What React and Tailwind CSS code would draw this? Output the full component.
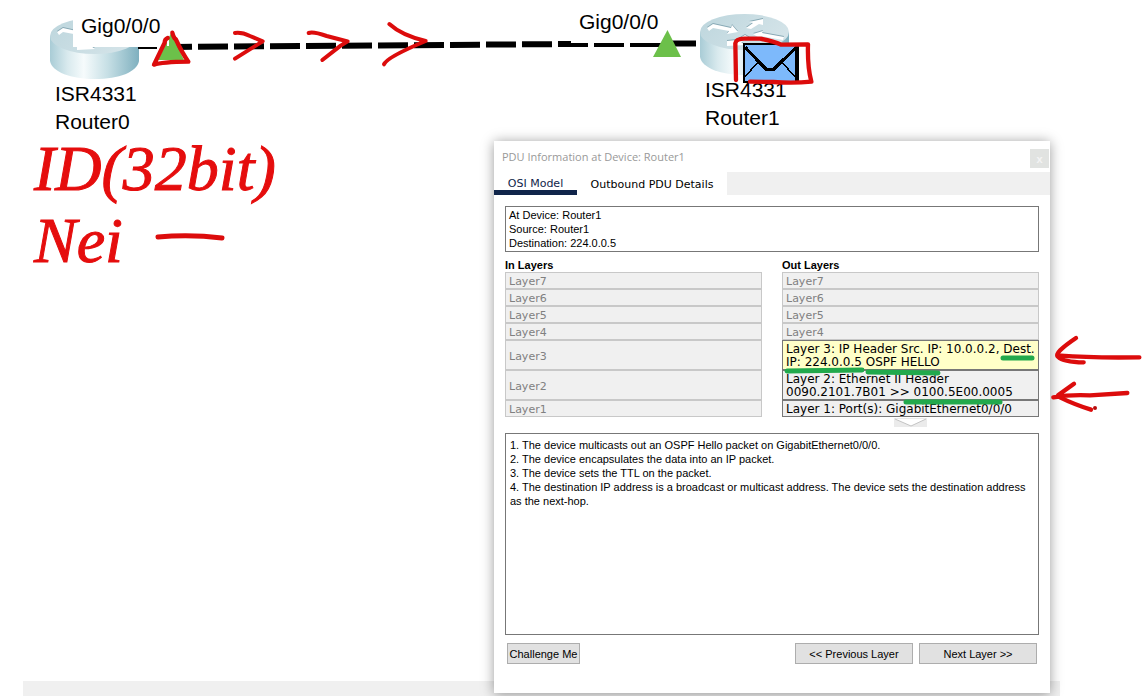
import React from "react";

const idleLayers = [
  { id: 7, lines: ["Layer7"] },
  { id: 6, lines: ["Layer6"] },
  { id: 5, lines: ["Layer5"] },
  { id: 4, lines: ["Layer4"] },
];

const inLayers = [
  ...idleLayers,
  { id: 3, lines: ["Layer3"], tall: true },
  { id: 2, lines: ["Layer2"], tall: true },
  { id: 1, lines: ["Layer1"] },
];

const outLayers = [
  ...idleLayers,
  {
    id: 3,
    lines: ["Layer 3: IP Header Src. IP: 10.0.0.2, Dest.", "IP: 224.0.0.5 OSPF HELLO"],
    tall: true,
    active: true,
    selected: true,
  },
  {
    id: 2,
    lines: ["Layer 2: Ethernet II Header", "0090.2101.7B01 >> 0100.5E00.0005"],
    tall: true,
    active: true,
  },
  { id: 1, lines: ["Layer 1: Port(s): GigabitEthernet0/0/0"], active: true },
];

const steps = [
  "1. The device multicasts out an OSPF Hello packet on GigabitEthernet0/0/0.",
  "2. The device encapsulates the data into an IP packet.",
  "3. The device sets the TTL on the packet.",
  "4. The destination IP address is a broadcast or multicast address. The device sets the destination address as the next-hop.",
];

function RouterArrows() {
  return (
    <>
      <path d="M8 15L14 11L32 15L33 12L39 19L28 21L30 18L14 15L10 18Z" />
      <path d="M47 15L54 10L50 9L64 6L64 12L60 11L52 16Z" />
      <path d="M54 21L64 18L63 20L85 24L84 27L62 23L62 26Z" />
      <path d="M28 28L38 27L46 22L51 25L42 29L46 32L28 33Z" />
    </>
  );
}

function Router({ id, name, className }) {
  return (
    <div className={`absolute w-[92px] ${className}`}>
      <svg viewBox="0 0 92 63" className="block h-[63px] w-full" aria-hidden="true">
        <defs>
          <linearGradient id={`${id}-body`} x1="0" x2="1">
            <stop offset="0" stopColor="#a9ccd6" />
            <stop offset="0.2" stopColor="#d9eaee" />
            <stop offset="0.38" stopColor="#f6fbfc" />
            <stop offset="0.65" stopColor="#c6dfe5" />
            <stop offset="1" stopColor="#7fb0bf" />
          </linearGradient>
          <linearGradient id={`${id}-top`} x1="0" x2="1" y2="0.4">
            <stop offset="0" stopColor="#bdd6dd" />
            <stop offset="1" stopColor="#d3e3e8" />
          </linearGradient>
        </defs>
        <path d="M1 19V44C3 55 22 62 46 62S88 55 90 44V19Z" fill={`url(#${id}-body)`} />
        <ellipse cx="45.500" cy="19" rx="44.500" ry="18" fill={`url(#${id}-top)`} />
        <g fill="#86a8b4" transform="translate(0 -1)">
          <RouterArrows />
        </g>
        <g fill="#ffffff">
          <RouterArrows />
        </g>
      </svg>
      <p className="pl-1.5 text-[21px] leading-7">
        ISR4331
        <br />
        {name}
      </p>
    </div>
  );
}

function PortLabel({ className }) {
  return <span className={`absolute bg-white text-[21px] leading-7 ${className}`}>Gig0/0/0</span>;
}

function Cable() {
  return (
    <svg viewBox="0 0 1148 136" className="absolute left-0 top-0 h-[136px] w-[1148px]" aria-hidden="true">
      <g stroke="#000" fill="none">
        <path d="M138 48H157" strokeWidth="2" />
        <path d="M176 47L192 46.700" strokeWidth="6" />
        <path d="M198 46.700L571 44" strokeWidth="6" strokeDasharray="30 6" />
        <path d="M570 45H588M594 45H624M630 45H667" strokeWidth="4" />
        <path d="M672 43.500H696" strokeWidth="6" />
      </g>
      <path d="M171 33L184 60H158Z" fill="#6cc04a" />
      <path d="M667.500 30L681 57H653Z" fill="#6cc04a" />
      <path d="M168 40V46" stroke="#fff" strokeWidth="2" />
    </svg>
  );
}

function Envelope() {
  return (
    <svg viewBox="0 0 56 42" className="absolute left-[743px] top-[42px] h-[42px] w-14" aria-hidden="true">
      <path d="M0 1H56V41H0Z" fill="#000" />
      <path d="M2 3H52V39H2Z" fill="#7db9fb" />
      <g fill="none" stroke="#000" shapeRendering="crispEdges">
        <path d="M2 5L15 19L23 27H31L39 19L54 5" strokeWidth="3" />
        <path d="M15 20L2 35M39 20L52 35" strokeWidth="1.500" />
      </g>
    </svg>
  );
}

function InkMarks() {
  return (
    <svg
      viewBox="0 0 1148 696"
      className="pointer-events-none absolute left-0 top-0 h-[696px] w-[1148px]"
      fill="none"
      strokeLinecap="round"
      strokeLinejoin="round"
      aria-hidden="true"
    >
      <g stroke="#dc0c0c">
        <g transform="translate(20 0) scale(0.33333)" strokeWidth="13">
          <path d="M443 114Q434 118 434 128L402 194Q425 186 505 185Q487 160 467 117L464 115Q460 110 457 98" />
        </g>
        <g transform="translate(220 0) scale(0.33333)" strokeWidth="12">
          <path d="M45 99Q65 96 90 108L128 124L45 176" />
          <path d="M266 99Q280 94 320 108Q350 116 383 124L362 137L307 180" />
          <path d="M508 72Q545 106 617 123Q500 172 492 193" />
        </g>
        <g transform="translate(560 0) scale(0.33333)" strokeWidth="13">
          <path d="M528 240L526 130Q528 114 560 116H600Q640 124 664 134L744 133Q742 200 754 245Q700 250 640 246L570 245" />
        </g>
        <g transform="translate(770 260) scale(0.33333)" strokeWidth="13">
          <path d="M918 234Q850 280 864 290Q880 306 941 307M872 287Q960 294 1108 292" />
          <path d="M912 371L864 406M850 412Q900 403 960 406L1072 399M870 412Q910 432 963 449" />
          <circle cx="975" cy="444" r="6" fill="#b80c0c" stroke="none" />
        </g>
        <path d="M158 237Q190 234 222 238" strokeWidth="5" />
      </g>
      <g stroke="#22a94c" strokeWidth="5">
        <path d="M1003 358H1032M787 371L862 370M868 372L938 373M906 402H1000" />
      </g>
    </svg>
  );
}

function LayerColumn({ title, layers, packet }) {
  return (
    <section className="min-w-0 flex-1">
      <h3 className="text-[11px] font-bold leading-[14px]">{title}</h3>
      <div className="flex flex-col">
        {layers.map((layer) => (
          <button
            key={layer.id}
            type="button"
            disabled={!layer.active}
            className={[
              "flex items-center whitespace-nowrap border pl-[3px] pt-0.5 text-left font-['DejaVu_Sans',sans-serif] leading-[13px]",
              layer.tall ? "h-[30px]" : "h-[17px]",
              layer.active ? "border-[#777777] text-[12px] text-black" : "border-[#c8c8c8] text-[11px] text-[#808080]",
              layer.selected ? "bg-[#ffffc8]" : "bg-[#f0f0f0]",
            ].join(" ")}
          >
            <span>
              {layer.lines.map((line) => (
                <span key={line} className="block">
                  {line}
                </span>
              ))}
            </span>
          </button>
        ))}
      </div>
      {packet && (
        <svg viewBox="0 0 33 9" className="mx-auto mt-px block h-[9px] w-[33px]" aria-hidden="true">
          <path d="M0 0H33V9H0Z" fill="#ebebeb" />
          <path d="M1 1H32L17 8Z" fill="#fff" />
          <path d="M1 1L17 8L32 1" fill="none" stroke="#c4c4c4" />
        </svg>
      )}
    </section>
  );
}

const buttonStyle = "h-[21px] border border-[#adadad] bg-[#e1e1e1] text-[11px] leading-[14px]";

function PduWindow() {
  return (
    <section
      aria-label="PDU Information"
      className="absolute left-[494px] top-[141px] w-[556px] bg-white pb-[29px] text-[11px] leading-[14px] shadow-[0_1px_12px_rgba(0,0,0,0.4)]"
    >
      <header className="flex h-[31px] items-center justify-between pl-2 pr-px">
        <h2 className="font-['Open_Sans',sans-serif] text-[11px] text-[#999999]">PDU Information at Device: Router1</h2>
        <button type="button" aria-label="Close" className="mt-1 size-[19px] bg-[#e1e3e1] font-bold text-[#f4f4f4]">
          x
        </button>
      </header>
      <nav className="flex h-[23px] bg-[#f0f0f0] font-['DejaVu_Sans',sans-serif]">
        <button type="button" className="w-[83px] border-b-[5px] border-[#10254a] bg-white pt-[5px] text-[#10254a]">
          OSI Model
        </button>
        <button type="button" className="w-[150px] bg-white pt-0.5">
          Outbound PDU Details
        </button>
      </nav>
      <div className="px-[11px] pt-[11px]">
        <div className="border border-[#777777] px-[3px] py-px">
          <p>At Device: Router1</p>
          <p>Source: Router1</p>
          <p>Destination: 224.0.0.5</p>
        </div>
        <div className="mt-1.5 flex gap-5">
          <LayerColumn title="In Layers" layers={inLayers} />
          <LayerColumn title="Out Layers" layers={outLayers} packet />
        </div>
        <div className="mt-1.5 h-[202px] border border-[#777777] p-1">
          {steps.map((step) => (
            <p key={step}>{step}</p>
          ))}
        </div>
        <div className="mt-2 flex gap-1.5 px-0.5">
          <button type="button" className={`${buttonStyle} mr-auto w-[73px]`}>
            Challenge Me
          </button>
          <button type="button" className={`${buttonStyle} w-[118px]`}>
            &lt;&lt; Previous Layer
          </button>
          <button type="button" className={`${buttonStyle} w-[118px]`}>
            Next Layer &gt;&gt;
          </button>
        </div>
      </div>
    </section>
  );
}

export default function App() {
  return (
    <main className="relative flex min-h-screen flex-col overflow-hidden bg-white font-['Liberation_Sans',Arial,sans-serif] text-black">
      <Router id="r0" name="Router0" className="left-[49px] top-[17px]" />
      <Router id="r1" name="Router1" className="left-[699px] top-[13px]" />
      <PortLabel className="left-[73px] top-[12px] h-[35px] pl-2" />
      <PortLabel className="left-[579px] top-[8px]" />
      <Cable />
      <Envelope />
      <div className="absolute left-[34px] top-[133px] font-['Liberation_Serif',serif] text-[64px] italic leading-[72px] text-[#e50d0d] [-webkit-text-stroke:1px_#e50d0d]">
        <p>ID(32bit)</p>
        <p>Nei</p>
      </div>
      <div className="ml-[23px] mr-[88px] mt-auto h-[15px] bg-[#f0f0f0]" />
      <PduWindow />
      <InkMarks />
    </main>
  );
}
